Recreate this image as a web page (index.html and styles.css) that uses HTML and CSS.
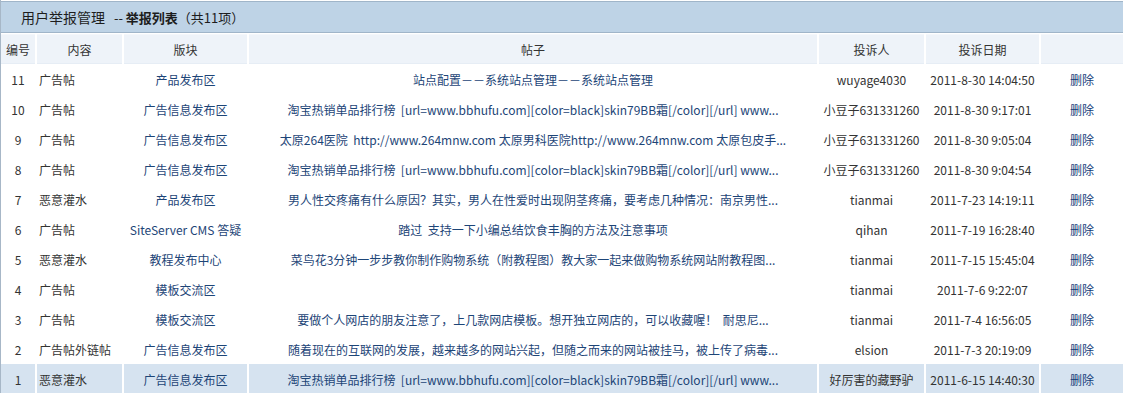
FILE: index.html
```html
<!DOCTYPE html>
<html lang="zh-CN">
<head>
<meta charset="utf-8">
<title>用户举报管理</title>
<link rel="stylesheet" href="styles.css">
</head>
<body>
<div class="panel">
  <div class="title"><span class="main">用户举报管理</span><span class="sep">--</span> <span class="sub">举报列表</span><span class="count">（共11项）</span></div>
  <table class="list">
    <colgroup>
      <col class="c-id"><col class="c-type"><col class="c-board"><col class="c-post"><col class="c-user"><col class="c-date"><col class="c-op">
    </colgroup>
    <thead>
      <tr><th class="t-id">编号</th><th>内容</th><th>版块</th><th>帖子</th><th>投诉人</th><th>投诉日期</th><th></th></tr>
    </thead>
    <tbody>
      <tr><td class="id">11</td><td class="type">广告帖</td><td class="link">产品发布区</td><td class="link">站点配置－－系统站点管理－－系统站点管理</td><td>wuyage4030</td><td>2011-8-30 14:04:50</td><td class="link op">删除</td></tr>
      <tr><td class="id">10</td><td class="type">广告帖</td><td class="link">广告信息发布区</td><td class="link">淘宝热销单品排行榜&nbsp; [url=www.bbhufu.com][color=black]skin79BB霜[/color][/url] www...</td><td>小豆子631331260</td><td>2011-8-30 9:17:01</td><td class="link op">删除</td></tr>
      <tr><td class="id">9</td><td class="type">广告帖</td><td class="link">广告信息发布区</td><td class="link">太原264医院&nbsp; http://www.264mnw.com 太原男科医院http://www.264mnw.com 太原包皮手...</td><td>小豆子631331260</td><td>2011-8-30 9:05:04</td><td class="link op">删除</td></tr>
      <tr><td class="id">8</td><td class="type">广告帖</td><td class="link">广告信息发布区</td><td class="link">淘宝热销单品排行榜&nbsp; [url=www.bbhufu.com][color=black]skin79BB霜[/color][/url] www...</td><td>小豆子631331260</td><td>2011-8-30 9:04:54</td><td class="link op">删除</td></tr>
      <tr><td class="id">7</td><td class="type">恶意灌水</td><td class="link">产品发布区</td><td class="link">男人性交疼痛有什么原因？其实，男人在性爱时出现阴茎疼痛，要考虑几种情况：南京男性...</td><td>tianmai</td><td>2011-7-23 14:19:11</td><td class="link op">删除</td></tr>
      <tr><td class="id">6</td><td class="type">广告帖</td><td class="link">SiteServer CMS 答疑</td><td class="link">踏过&nbsp; 支持一下小编总结饮食丰胸的方法及注意事项</td><td>qihan</td><td>2011-7-19 16:28:40</td><td class="link op">删除</td></tr>
      <tr><td class="id">5</td><td class="type">恶意灌水</td><td class="link">教程发布中心</td><td class="link">菜鸟花3分钟一步步教你制作购物系统（附教程图）教大家一起来做购物系统网站附教程图...</td><td>tianmai</td><td>2011-7-15 15:45:04</td><td class="link op">删除</td></tr>
      <tr><td class="id">4</td><td class="type">广告帖</td><td class="link">模板交流区</td><td class="link"></td><td>tianmai</td><td>2011-7-6 9:22:07</td><td class="link op">删除</td></tr>
      <tr><td class="id">3</td><td class="type">广告帖</td><td class="link">模板交流区</td><td class="link">要做个人网店的朋友注意了，上几款网店模板。想开独立网店的，可以收藏喔！&nbsp; 耐思尼...</td><td>tianmai</td><td>2011-7-4 16:56:05</td><td class="link op">删除</td></tr>
      <tr><td class="id">2</td><td class="type">广告帖外链帖</td><td class="link">广告信息发布区</td><td class="link">随着现在的互联网的发展，越来越多的网站兴起，但随之而来的网站被挂马，被上传了病毒...</td><td>elsion</td><td>2011-7-3 20:19:09</td><td class="link op">删除</td></tr>
      <tr class="active"><td class="id">1</td><td class="type">恶意灌水</td><td class="link">广告信息发布区</td><td class="link">淘宝热销单品排行榜&nbsp; [url=www.bbhufu.com][color=black]skin79BB霜[/color][/url] www...</td><td>好厉害的藏野驴</td><td>2011-6-15 14:40:30</td><td class="link op">删除</td></tr>
    </tbody>
  </table>
</div>
</body>
</html>
```

FILE: styles.css
```css
html, body {
  margin: 0;
  padding: 0;
  background: #ffffff;
}

body {
  font-family: "Noto Sans CJK SC", "Noto Sans", "DejaVu Sans", sans-serif;
  font-size: 12px;
  color: #333333;
}

.panel {
  border-left: 1px solid #a7b7c7;
  height: 393px;
  overflow: hidden;
}

.title {
  margin-top: 1px;
  height: 30px;
  line-height: 30px;
  padding-left: 20px;
  background: #bed3e6;
  border-top: 1px solid #a0b5c9;
  border-bottom: 1px solid #a0b5c9;
  color: #1d1d1d;
  white-space: nowrap;
}

.title .main {
  font-size: 14px;
}

.title .sep {
  font-size: 13px;
  margin-left: 9px;
}

.title .sub {
  font-size: 13px;
  font-weight: bold;
}

.title .count {
  font-size: 13px;
}

.list {
  table-layout: fixed;
  border-collapse: separate;
  border-spacing: 2px 0;
  margin-top: 1px;
  margin-left: -2px;
  width: calc(100% + 4px);
}

.c-id { width: 34px; }
.c-type { width: 85px; }
.c-board { width: 123px; }
.c-post { width: 568px; }
.c-user { width: 105px; }
.c-date { width: 113px; }

.list th {
  height: 28px;
  padding: 0;
  font-weight: normal;
  background: #eef3f9;
  border-top: 1px solid #f4f7fb;
  border-bottom: 1px solid #e6edf5;
  color: #333333;
  text-align: center;
  white-space: nowrap;
}

.list td {
  height: 30px;
  padding: 0;
  text-align: center;
  white-space: nowrap;
  overflow: hidden;
}

.list td.type {
  text-align: left;
  padding-left: 2px;
}

.list td.link {
  color: #1d4577;
}

.list td.op {
  color: #15407a;
}

.list tr.active td {
  background: #d6e3f0;
}
```
